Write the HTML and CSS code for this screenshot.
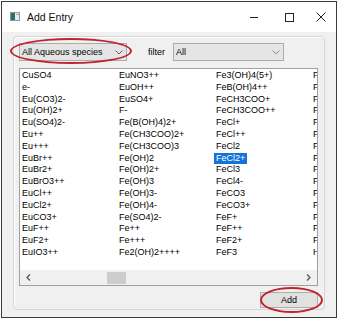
FILE: index.html
```html
<!DOCTYPE html>
<html lang="en">
<head>
  <meta charset="UTF-8">
  <title>Add Entry</title>
  <link rel="stylesheet" href="styles.css">
</head>
<body>
  <div class="window">
    <div class="titlebar">
      <svg class="app-icon" width="10" height="9" viewBox="0 0 10 9">
        <rect x="0.5" y="0.5" width="9" height="8" fill="#e8eef0" stroke="#8a9aa0"/>
        <rect x="1" y="1" width="4" height="7" fill="#2e6e68"/>
        <rect x="6" y="2" width="3" height="1" fill="#9ab"/>
      </svg>
      <span class="title">Add Entry</span>
      <div class="controls">
        <div class="ctl">
          <svg width="10" height="10" viewBox="0 0 10 10"><path d="M1 5.5h8" stroke="#222" stroke-width="1"/></svg>
        </div>
        <div class="ctl">
          <svg width="10" height="10" viewBox="0 0 10 10"><rect x="1.5" y="1.5" width="8" height="8" fill="none" stroke="#222" stroke-width="1"/></svg>
        </div>
        <div class="ctl close">
          <svg width="10" height="10" viewBox="0 0 10 10"><path d="M0.5 0.5l9 9M9.5 0.5l-9 9" stroke="#222" stroke-width="1"/></svg>
        </div>
      </div>
    </div>

    <div class="client">
      <div class="group">
        <div class="toolbar">
          <div class="marked">
            <div class="combo wide">
              <span>All Aqueous species</span>
              <svg width="8" height="5" viewBox="0 0 8 5"><path d="M0.5 0.5l3.5 3.5 3.5-3.5" fill="none" stroke="#606060"/></svg>
            </div>
            <span class="ring ring-combo"></span>
          </div>
          <span class="label">filter</span>
          <div class="combo">
            <span>All</span>
            <svg width="8" height="5" viewBox="0 0 8 5"><path d="M0.5 0.5l3.5 3.5 3.5-3.5" fill="none" stroke="#909090"/></svg>
          </div>
        </div>

        <div class="list">
          <div class="items" id="items"></div>
          <div class="hscroll">
            <div class="arrow">
              <svg width="5" height="7" viewBox="0 0 5 7"><path d="M4 0.5l-3 3 3 3" fill="none" stroke="#555" stroke-width="1.3"/></svg>
            </div>
            <div class="track"><div class="thumb"></div></div>
            <div class="arrow">
              <svg width="5" height="7" viewBox="0 0 5 7"><path d="M1 0.5l3 3-3 3" fill="none" stroke="#555" stroke-width="1.3"/></svg>
            </div>
          </div>
        </div>

        <div class="actions">
          <div class="marked">
            <button class="btn">Add</button>
            <span class="ring ring-btn"></span>
          </div>
        </div>
      </div>
    </div>
  </div>

  <script>
    // visible columns of the species list (the 4th is clipped by the list edge)
    const especies = [
      'CuSO4', 'e-', 'Eu(CO3)2-', 'Eu(OH)2+', 'Eu(SO4)2-', 'Eu++', 'Eu+++', 'EuBr++',
      'EuBr2+', 'EuBrO3++', 'EuCl++', 'EuCl2+', 'EuCO3+', 'EuF++', 'EuF2+', 'EuIO3++',
      'EuNO3++', 'EuOH++', 'EuSO4+', 'F-', 'Fe(B(OH)4)2+', 'Fe(CH3COO)2+', 'Fe(CH3COO)3', 'Fe(OH)2',
      'Fe(OH)2+', 'Fe(OH)3', 'Fe(OH)3-', 'Fe(OH)4-', 'Fe(SO4)2-', 'Fe++', 'Fe+++', 'Fe2(OH)2++++',
      'Fe3(OH)4(5+)', 'FeB(OH)4++', 'FeCH3COO+', 'FeCH3COO++', 'FeCl+', 'FeCl++', 'FeCl2', 'FeCl2+',
      'FeCl3', 'FeCl4-', 'FeCO3', 'FeCO3+', 'FeF+', 'FeF++', 'FeF2+', 'FeF3',
      'F', 'F', 'F', 'F', 'F', 'F', 'F', 'F',
      'F', 'F', 'F', 'F', 'F', 'F', 'F', 'H'
    ];
    const seleccion = 'FeCl2+';
    const lista = document.getElementById('items');
    especies.forEach(nombre => {
      const item = document.createElement('span');
      item.className = 'item' + (nombre === seleccion ? ' selected' : '');
      item.textContent = nombre;
      lista.appendChild(item);
    });
  </script>
</body>
</html>
```

FILE: styles.css
```css
body {
  margin: 0;
  width: 340px;
  height: 322px;
  background: #fff;
  font-family: "Liberation Sans", Arial, sans-serif;
  font-size: 9px;
  color: #000;
  overflow: hidden;
}
.window {
  box-sizing: border-box;
  margin: 1px 0 0 1px;
  width: 336px;
  height: 317px;
  border: 1px solid #3a3a3a;
  background: #f0f0f0;
  display: flex;
  flex-direction: column;
}
.titlebar {
  height: 30px;
  flex: none;
  background: #fff;
  display: flex;
  align-items: center;
  padding-left: 8px;
}
.app-icon { margin-top: -1px; }
.title {
  font-size: 10.5px;
  margin-left: 7px;
  color: #111;
}
.controls {
  margin-left: auto;
  display: flex;
  height: 100%;
}
.ctl {
  width: 35px;
  display: flex;
  align-items: center;
  justify-content: center;
}
.ctl.close { width: 30px; }

.client {
  flex: 1;
  display: flex;
  min-height: 0;
  padding: 4px 11px 7px 11px;
}
.group {
  flex: 1;
  min-width: 0;
  display: flex;
  flex-direction: column;
  border: 1px solid #d5d5d5;
  border-radius: 4px;
  padding: 6px 6px 1px 5px;
  box-shadow: inset 1px 1px 0 #fff;
}
.toolbar {
  height: 18px;
  display: flex;
  align-items: center;
}
.marked { position: relative; display: flex; }
.combo {
  box-sizing: border-box;
  width: 111px;
  height: 18px;
  border: 1px solid #acacac;
  background: #e5e5e5;
  display: flex;
  align-items: center;
  justify-content: space-between;
  padding: 0 3px 0 2px;
}
.combo.wide { width: 108px; }
.label { margin: 0 8px 0 21px; }
.ring {
  position: absolute;
  border: 2px solid #c0232c;
  border-radius: 50%;
  pointer-events: none;
}
.ring-combo { left: -9px; top: -5px; width: 118px; height: 22px; }
.ring-btn { left: 0px; top: -5px; width: 59px; height: 22px; }

.list {
  margin-top: 7px;
  height: 218px;
  min-width: 0;
  box-sizing: border-box;
  border: 1px solid #a0a0a0;
  background: #fff;
  display: flex;
  flex-direction: column;
  overflow: hidden;
}
.items {
  flex: 1;
  min-width: 0;
  display: grid;
  grid-template-rows: repeat(16, 11.8px);
  grid-auto-flow: column;
  grid-auto-columns: 97px;
  padding-top: 1px;
  overflow: hidden;
  white-space: nowrap;
}
.item {
  justify-self: start;
  padding: 0 2px;
  line-height: 11.8px;
}
.item.selected { background: #1373d9; color: #fff; }
.hscroll {
  height: 15px;
  flex: none;
  display: flex;
  background: #f0f0f0;
}
.arrow {
  width: 17px;
  display: flex;
  align-items: center;
  justify-content: center;
}
.track { flex: 1; display: flex; align-items: center; }
.thumb {
  margin-left: 70px;
  width: 19px;
  height: 12px;
  background: #cdcdcd;
}

.actions {
  margin-top: 6px;
  display: flex;
  justify-content: flex-end;
}
.btn {
  box-sizing: border-box;
  width: 58px;
  height: 16px;
  margin: 0;
  padding: 0;
  border: 1px solid #adadad;
  background: #e1e1e1;
  font-family: "Liberation Sans", Arial, sans-serif;
  font-size: 9px;
  color: #000;
}
```
